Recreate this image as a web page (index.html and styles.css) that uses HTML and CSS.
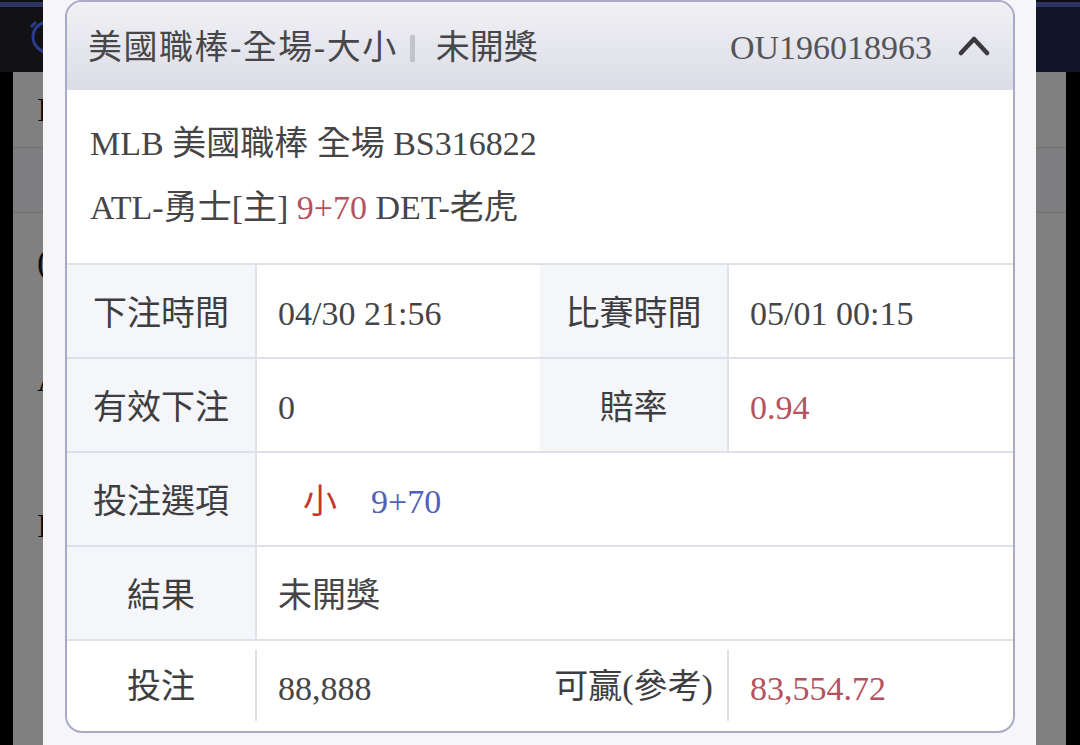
FILE: index.html
```html
<!DOCTYPE html>
<html lang="zh-Hant">
<head>
<meta charset="utf-8">
<title>注單詳情</title>
<link rel="stylesheet" href="styles.css">
</head>
<body>
<div class="screen">
  <div class="topbar">
    <svg class="clock" width="40" height="40" viewBox="0 0 40 40"><circle cx="20" cy="21" r="15" fill="none" stroke="#2c3c8c" stroke-width="3"/><path d="M8 6 L3 11 M32 6 L37 11" stroke="#2c3c8c" stroke-width="3" fill="none"/></svg>
  </div>
  <div class="under">
    <div class="edge"></div>
    <div class="bgpage">
      <div class="bgrow r1">I</div>
      <div class="bgrow r2"></div>
      <div class="bgtext t1">(</div>
      <div class="bgtext t2">A</div>
      <div class="bgtext t3">I</div>
    </div>
    <div class="edge"></div>
  </div>

  <div class="modal">
    <div class="card">
      <div class="card-head">
        <div class="title"><span class="tname">美國職棒-全場-大小</span><span class="sep"></span><span>未開獎</span></div>
        <div class="code"><span>OU196018963</span>
          <svg class="chev" width="32" height="22" viewBox="0 0 32 22"><polyline points="3,18 16,4 29,18" fill="none" stroke="#3a3a3e" stroke-width="4.5" stroke-linecap="round" stroke-linejoin="round"/></svg>
        </div>
      </div>
      <div class="info">
        <div class="line">MLB 美國職棒 全場 BS316822</div>
        <div class="line">ATL-勇士[主] <span class="red">9+70</span> DET-老虎</div>
      </div>
      <div class="rows">
        <div class="row">
          <div class="lab">下注時間</div>
          <div class="val">04/30 21:56</div>
          <div class="lab">比賽時間</div>
          <div class="val">05/01 00:15</div>
        </div>
        <div class="row">
          <div class="lab">有效下注</div>
          <div class="val">0</div>
          <div class="lab">賠率</div>
          <div class="val red">0.94</div>
        </div>
        <div class="row">
          <div class="lab">投注選項</div>
          <div class="val wide"><span class="pick">小</span><span class="blue">9+70</span></div>
        </div>
        <div class="row">
          <div class="lab">結果</div>
          <div class="val wide">未開獎</div>
        </div>
        <div class="row last">
          <div class="lab">投注</div>
          <div class="val">88,888</div>
          <div class="lab">可贏(參考)</div>
          <div class="val red">83,554.72</div>
        </div>
      </div>
    </div>
  </div>
</div>
</body>
</html>
```
FILE: styles.css
```css
html, body {
  margin: 0;
  padding: 0;
  background: #000;
}
body {
  width: 1080px;
  height: 745px;
  overflow: hidden;
  font-family: "Liberation Serif", "Noto Sans CJK TC", serif;
}
.screen {
  position: relative;
  width: 1080px;
  height: 745px;
}
.topbar {
  height: 72px;
  background:
    linear-gradient(to bottom, #0e0f14 0, #0e0f14 2px, #2b3462 2px, #2b3462 7px, transparent 7px),
    linear-gradient(to right, #111113, #12142a);
  padding: 16px 0 0 28px;
  box-sizing: border-box;
}
.clock { display: block; }
.under {
  display: flex;
  height: 673px;
}
.edge {
  width: 13px;
  background: #000;
}
.edge:last-child { width: 14px; }
.bgpage {
  flex: 1;
  background: #808080;
  color: #0c0c0c;
  font-size: 34px;
}
.bgrow {
  box-sizing: border-box;
  border-bottom: 1px solid #717171;
  padding-left: 24px;
}
.r1 { height: 76px; line-height: 76px; }
.r2 { height: 65px; background: #7e7e80; }
.bgtext { padding-left: 24px; line-height: 40px; }
.t1 { margin-top: 29px; }
.t2 { margin-top: 78px; }
.t3 { margin-top: 106px; }

.modal {
  position: absolute;
  top: 0;
  left: 43px;
  width: 993px;
  height: 745px;
  box-sizing: border-box;
  background: #f6f6f8;
  padding: 0 21px 12px 22px;
}
.card {
  height: 733px;
  box-sizing: border-box;
  border: 2px solid #a9aac7;
  border-radius: 17px;
  background: #fff;
  overflow: hidden;
  display: flex;
  flex-direction: column;
}
.card-head {
  height: 88px;
  flex: none;
  display: flex;
  align-items: center;
  justify-content: space-between;
  padding: 4px 23px 0 21px;
  box-sizing: border-box;
  background: linear-gradient(to bottom, #f1f1f5, #dbdce6);
}
.title {
  display: flex;
  align-items: center;
  font-size: 34px;
  color: #474749;
  line-height: 40px;
}
.tname { letter-spacing: 1.5px; }
.sep {
  width: 5px;
  height: 27px;
  background: #c3c3ca;
  margin: 0 21px 0 12px;
  border-radius: 1px;
}
.code {
  display: flex;
  align-items: center;
  font-size: 34px;
  color: #555558;
  line-height: 40px;
}
.chev {
  display: block;
  margin-left: 26px;
  margin-top: -4px;
}
.info {
  height: 173px;
  flex: none;
  box-sizing: border-box;
  padding: 22px 23px 0 23px;
  font-size: 34px;
  line-height: 64px;
  color: #454547;
}
.red { color: #b5525e; }
.blue { color: #5061b6; }
.pick { color: #c4362c; margin: 0 34px 0 25px; }

.rows {
  flex: 1;
  display: flex;
  flex-direction: column;
}
.row {
  height: 94px;
  flex: none;
  box-sizing: border-box;
  border-top: 2px solid #dfe0ea;
  display: grid;
  grid-template-columns: 190px 283px 189px 1fr;
  font-size: 34px;
  line-height: 44px;
}
.row.last {
  height: auto;
  flex: 1;
}
.lab {
  background: #f5f6fa;
  border-right: 2px solid #dfe0ea;
  display: flex;
  align-items: center;
  justify-content: center;
  padding-top: 6px;
  color: #3e3e40;
}
.val {
  display: flex;
  align-items: center;
  padding-left: 21px;
  padding-top: 6px;
  color: #454547;
}
.val.red { color: #b5525e; }
.val.wide { grid-column: 2 / -1; }
.row.last .lab {
  background: none;
  margin: 9px 0 10px;
  padding-top: 3px;
}
.row.last .val { padding-top: 6px; }
```
